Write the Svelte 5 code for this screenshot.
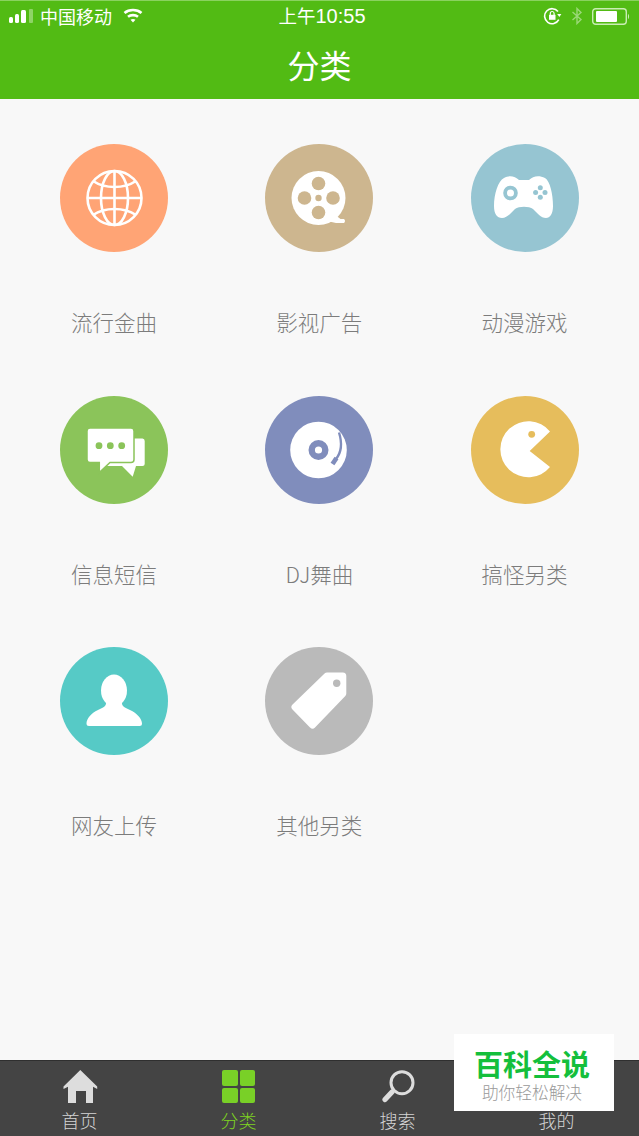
<script>
  const cats = [
    { name: '流行金曲', icon: 'globe', bg: '#ffa475' },
    { name: '影视广告', icon: 'reel', bg: '#cdb68f' },
    { name: '动漫游戏', icon: 'pad', bg: '#96c5d2' },
    { name: '信息短信', icon: 'chat', bg: '#8bc45a' },
    { name: 'DJ舞曲', icon: 'disc', bg: '#808dbc' },
    { name: '搞怪另类', icon: 'pac', bg: '#e6bd5c' },
    { name: '网友上传', icon: 'user', bg: '#56cac6' },
    { name: '其他另类', icon: 'tag', bg: '#bababa' }
  ];
</script>

<div class="page">
  <header>
    <div class="status">
      <div class="status-left">
        <svg width="25" height="16" viewBox="0 0 25 16">
          <rect x="0" y="9" width="4" height="6" rx="1.500" fill="#fff" />
          <rect x="6" y="6" width="4" height="9" rx="1.500" fill="#fff" />
          <rect x="12" y="2" width="5" height="13" rx="1.500" fill="#fff" />
          <rect x="20" y="1" width="4" height="14" rx="1" fill="#8fd466" />
        </svg>
        <span class="carrier">中国移动</span>
        <svg class="wifi" width="20" height="16" viewBox="0 0 20 16" fill="none" stroke="#fff" stroke-width="2.600">
          <path d="M1.500 5C6 1 14 1 18.500 5" />
          <path d="M5 8.800C7.800 6.500 12.200 6.500 15 8.800" />
          <path d="M7.500 11.800L10 14.500 12.500 11.800C11 10.800 9 10.800 7.500 11.800Z" fill="#fff" stroke="none" />
        </svg>
      </div>
      <span class="time">上午<span class="digits">10:55</span></span>
      <div class="status-right">
        <svg width="20" height="18" viewBox="0 0 20 18" fill="none" stroke="#fff" stroke-width="1.600">
          <path d="M15 4.500A7.500 7.500 0 1 0 15.800 12.600" />
          <rect x="6" y="7.800" width="6.500" height="5" fill="#fff" stroke="none" />
          <path d="M7.300 8V6.400a1.900 1.900 0 0 1 3.800 0V8" stroke-width="1.200" />
          <path d="M14.200 7h4.200l-2.100 3z" fill="#fff" stroke="none" />
        </svg>
        <svg class="bt" width="12" height="18" viewBox="0 0 12 18" fill="none" stroke="#9bd878" stroke-width="1.400">
          <path d="M1.500 5L10 12.600 6 16.500V1.500L10 5.400 1.500 13" />
        </svg>
        <svg width="38" height="17" viewBox="0 0 38 17">
          <rect x="0.700" y="0.700" width="33.600" height="15.600" rx="3" fill="none" stroke="#c9edb4" stroke-width="1.400" />
          <rect x="4" y="3" width="21" height="11" rx="1" fill="#fff" />
          <path d="M36 6c1.400.4 1.400 4.600 0 5z" fill="#c9edb4" />
        </svg>
      </div>
    </div>
    <h1>分类</h1>
  </header>

  <main>
    {#each cats as cat}
      <div class="cat">
        <div class="round" style="background: {cat.bg}; color: {cat.bg}">
          <svg width="108" height="108" viewBox="0 0 108 108">
            {#if cat.icon === 'globe'}
              <g fill="none" stroke="#fff" stroke-width="2.600">
                <circle cx="54.500" cy="54" r="27" />
                <ellipse cx="54.500" cy="54" rx="13.500" ry="27" />
                <path d="M54.500 27V81M27.500 54H81.500" />
                <path d="M33 37C45 45 64 45 76 37M33 71C45 63 64 63 76 71" />
              </g>
            {:else if cat.icon === 'reel'}
              <circle cx="53.500" cy="54" r="27" fill="#fff" />
              <path fill="#fff" d="M62 77L69 70L75.500 75H79Q81 77 79 79H71Z" />
              <circle cx="53.500" cy="39.500" r="6.800" fill="currentColor" />
              <circle cx="53.500" cy="68.500" r="6.800" fill="currentColor" />
              <circle cx="39.500" cy="54" r="6.800" fill="currentColor" />
              <circle cx="68" cy="54" r="6.800" fill="currentColor" />
              <circle cx="53.500" cy="54" r="3.200" fill="currentColor" />
            {:else if cat.icon === 'pad'}
              <path fill="#fff" d="M33 34C38 31 44 32 48 36L58 36C62 32 68 31 74 34C79 37 82 50 82 62C82 70 79 74 75 74C70 74 66 69 62 65C58 62 48 62 44 65C40 69 36 74 31 74C26 74 23 70 23 62C23 50 27 37 33 34Z" />
              <circle cx="39.500" cy="49" r="5.400" fill="none" stroke="currentColor" stroke-width="3.800" />
              <circle cx="64.600" cy="48.500" r="2.500" fill="currentColor" />
              <circle cx="74" cy="48.500" r="2.500" fill="currentColor" />
              <circle cx="69.300" cy="43.700" r="2.500" fill="currentColor" />
              <circle cx="69.300" cy="53.300" r="2.500" fill="currentColor" />
            {:else if cat.icon === 'chat'}
              <path fill="#fff" d="M70 42.500H82.500Q84.700 42.500 84.700 45V68Q84.700 70 82.500 70H76L72.700 80.700L62 70H46V60H70Z" />
              <path fill="#fff" stroke="currentColor" stroke-width="1.500" d="M30 32H71Q74 32 74 35V63.500Q74 66.500 71 66.500H50L39.300 76.500V66.500H30Q27 66.500 27 63.500V35Q27 32 30 32Z" />
              <circle cx="39" cy="49.700" r="3.400" fill="currentColor" />
              <circle cx="50.300" cy="49.700" r="3.400" fill="currentColor" />
              <circle cx="61.700" cy="49.700" r="3.400" fill="currentColor" />
            {:else if cat.icon === 'disc'}
              <circle cx="53.500" cy="54" r="28.300" fill="#fff" />
              <circle cx="53.500" cy="54" r="6.800" fill="none" stroke="currentColor" stroke-width="6.400" />
              <path d="M74 36.500C77 46 77.500 55 71 63" fill="none" stroke="currentColor" stroke-width="2.400" />
              <path d="M71.500 62L67.500 68" fill="none" stroke="currentColor" stroke-width="4.600" />
            {:else if cat.icon === 'pac'}
              <path fill="#fff" d="M79 35.500A28 28 0 1 0 79 71L58.700 55Z" />
              <circle cx="60.700" cy="38.300" r="3.400" fill="currentColor" />
            {:else if cat.icon === 'user'}
              <ellipse cx="54" cy="43.500" rx="13" ry="16" fill="#fff" />
              <path fill="#fff" d="M46 54C47 60 42 61 38 63C31 66 26.500 72 26.500 76.500Q26.500 79 29 79H79.500Q82 79 82 76.500C82 72 77 66 70 63C66 61 61 60 62 54Z" />
            {:else}
              <path fill="#fff" stroke="#fff" stroke-width="7" stroke-linejoin="round" d="M62 29H77.800V46.500L47.500 78L30 60Z" />
              <circle cx="71.700" cy="36.300" r="3.700" fill="currentColor" />
            {/if}
          </svg>
        </div>
        <span class="label">{cat.name}</span>
      </div>
    {/each}
  </main>

  <nav>
    <div class="tab">
      <svg width="36" height="33" viewBox="0 0 36 33" fill="#ddd">
        <path d="M18.300 0L35.200 16.500V19L31 16.800V33H24V21H14V33H6V16.800L1.500 19V16.500Z" />
      </svg>
      <span>首页</span>
    </div>
    <div class="tab on">
      <div class="tiles"><i></i><i></i><i></i><i></i></div>
      <span>分类</span>
    </div>
    <div class="tab">
      <svg width="36" height="33" viewBox="0 0 36 33" fill="none" stroke="#ddd">
        <circle cx="22" cy="12.700" r="11" stroke-width="3" />
        <path d="M12 22L5 29.500" stroke-width="5.200" stroke-linecap="round" />
      </svg>
      <span>搜索</span>
    </div>
    <div class="tab">
      <div class="blank"></div>
      <span>我的</span>
    </div>
  </nav>

  <div class="mark">
    <b>百科全说</b>
    <small>助你轻松解决</small>
  </div>
</div>

<style>
  :global(body) {
    margin: 0;
  }

  .page {
    position: relative;
    display: flex;
    flex-direction: column;
    width: 639px;
    height: 1136px;
    overflow: hidden;
    background: #f8f8f8;
    font-family: "Noto Sans CJK SC", "Noto Sans", sans-serif;
  }

  header {
    height: 99px;
    box-sizing: border-box;
    background: #52bb14;
    border-top: 1px solid #8ad25f;
    color: #fff;
  }

  .status {
    display: grid;
    grid-template-columns: 1fr auto 1fr;
    align-items: center;
    height: 29px;
    padding: 0 9px;
    font-size: 18px;
    line-height: 29px;
  }

  .status-left {
    display: flex;
    align-items: center;
  }

  .carrier {
    margin-left: 6px;
  }

  .wifi {
    margin-left: 11px;
  }

  .status-right {
    display: flex;
    align-items: center;
    justify-content: flex-end;
  }

  .bt {
    margin: 0 9px 0 8px;
  }

  .time {
    margin-left: 5px;
    font-size: 18.500px;
  }

  .digits {
    font-family: "Liberation Sans", sans-serif;
    font-size: 20px;
  }

  h1 {
    margin: 0;
    font-size: 32px;
    font-weight: 400;
    line-height: 40px;
    margin-top: 14px;
    text-align: center;
  }

  main {
    flex: 1;
    display: grid;
    grid-template-columns: repeat(3, 205.250px);
    grid-auto-rows: 251.500px;
    padding: 45px 0 0 11.500px;
  }

  .cat {
    display: flex;
    flex-direction: column;
    align-items: center;
  }

  .round {
    width: 108px;
    height: 108px;
    border-radius: 50%;
  }

  .round svg {
    display: block;
  }

  .label {
    margin-top: 55px;
    font-size: 21.500px;
    font-weight: 300;
    line-height: 30px;
    color: #7c7c7c;
  }

  nav {
    display: grid;
    grid-template-columns: repeat(4, 159px);
    height: 76px;
    box-sizing: border-box;
    background: #444;
    border-top: 1px solid #2f2f2f;
  }

  .tab {
    display: flex;
    flex-direction: column;
    align-items: center;
    padding-top: 9px;
    color: #d4d4d4;
    font-size: 18px;
    font-weight: 300;
    line-height: 26px;
  }

  .tab svg,
  .tiles,
  .blank {
    height: 33px;
    flex: none;
  }

  .tab span {
    margin-top: 4px;
  }

  .tab.on {
    color: #7ed321;
  }

  .tiles {
    display: grid;
    grid-template-columns: 15.500px 15.500px;
    grid-template-rows: 15.500px 15.500px;
    gap: 2px;
  }

  .tiles i {
    background: #79d027;
    border-radius: 2px;
  }

  .mark {
    position: absolute;
    left: 454px;
    top: 1034px;
    display: flex;
    flex-direction: column;
    align-items: center;
    box-sizing: border-box;
    width: 160px;
    height: 77px;
    padding-right: 4px;
    background: #fff;
  }

  .mark b {
    margin-top: 11px;
    font-size: 29px;
    line-height: 36px;
    color: #14bf3c;
  }

  .mark small {
    font-size: 16.700px;
    font-weight: 300;
    line-height: 22px;
    color: #999;
  }
</style>
